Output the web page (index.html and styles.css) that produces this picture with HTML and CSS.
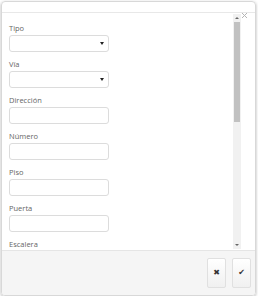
FILE: index.html
```html
<!DOCTYPE html>
<html lang="es">
<head>
    <meta charset="UTF-8">
    <meta name="viewport" content="width=device-width, initial-scale=1.0">
    <title>Dirección</title>
    <link rel="stylesheet" href="styles.css">
</head>
<body>
    <div class="dialog">
        <div class="header"></div>
        <span class="close">
            <svg width="7" height="7" viewBox="0 0 7 7"><path d="M1 1L6 6M6 1L1 6" stroke="#b5b5b5" stroke-width="1" fill="none"/></svg>
        </span>
        <div class="body">
            <div class="content">
                <div class="field">
                    <label>Tipo</label>
                    <div class="select"><span class="caret"></span></div>
                </div>
                <div class="field">
                    <label>Vía</label>
                    <div class="select"><span class="caret"></span></div>
                </div>
                <div class="field">
                    <label>Dirección</label>
                    <div class="input"></div>
                </div>
                <div class="field">
                    <label>Número</label>
                    <div class="input"></div>
                </div>
                <div class="field">
                    <label>Piso</label>
                    <div class="input"></div>
                </div>
                <div class="field">
                    <label>Puerta</label>
                    <div class="input"></div>
                </div>
                <div class="field">
                    <label>Escalera</label>
                    <div class="input"></div>
                </div>
            </div>
            <div class="scrollbar">
                <div class="arrow"><span class="up"></span></div>
                <div class="track"><div class="thumb"></div></div>
                <div class="arrow"><span class="down"></span></div>
            </div>
        </div>
        <div class="footer">
            <button class="btn">✖</button>
            <button class="btn">✔</button>
        </div>
    </div>
</body>
</html>
```
FILE: styles.css
```css
body {
    margin: 0;
    background: #fff;
    font-family: "Open Sans", Arial, sans-serif;
}
.dialog {
    position: relative;
    box-sizing: border-box;
    width: 255px;
    height: 295px;
    margin: 1px 0 0 1px;
    border: 1px solid #d8d8d8;
    border-radius: 4px;
    box-shadow: 0 1px 3px rgba(0, 0, 0, 0.3);
    display: flex;
    flex-direction: column;
    overflow: hidden;
}
.header {
    height: 10px;
    border-bottom: 1px solid #e8e8e8;
}
.close {
    position: absolute;
    top: 10px;
    right: 7px;
    line-height: 0;
}
.body {
    height: 237px;
    display: flex;
}
.content {
    flex: 1;
    overflow: hidden;
    padding: 9px 0 0 7px;
}
.field {
    margin-bottom: 6px;
}
.field label {
    display: block;
    font-size: 7.5px;
    line-height: 12px;
    color: #666;
    margin-bottom: 1px;
}
.select, .input {
    box-sizing: border-box;
    width: 100px;
    height: 17px;
    border: 1px solid #dcdcdc;
    border-radius: 3px;
    background: #fff;
    position: relative;
}
.caret {
    position: absolute;
    right: 4px;
    top: 6px;
    border-left: 2px solid transparent;
    border-right: 2px solid transparent;
    border-top: 3px solid #222;
}
.scrollbar {
    width: 8px;
    margin: 1px 14px 1px 0;
    background: #f1f1f1;
    display: flex;
    flex-direction: column;
}
.arrow {
    height: 8px;
    display: flex;
    align-items: center;
    justify-content: center;
}
.up {
    border-left: 2px solid transparent;
    border-right: 2px solid transparent;
    border-bottom: 2px solid #666;
}
.down {
    border-left: 2px solid transparent;
    border-right: 2px solid transparent;
    border-top: 2px solid #666;
}
.track {
    flex: 1;
    padding: 0 1px;
}
.thumb {
    height: 100px;
    background: #c1c1c1;
}
.footer {
    flex: 1;
    border-top: 1px solid #e5e5e5;
    background: #f5f5f5;
    display: flex;
    justify-content: flex-end;
    align-items: flex-start;
    gap: 6px;
    padding: 7px 4px 0 0;
}
.btn {
    width: 19px;
    height: 30px;
    padding: 0;
    border: 1px solid #e0e0e0;
    border-radius: 2px;
    background: linear-gradient(#ffffff, #f0f0f0);
    color: #333;
    font-family: "DejaVu Sans", sans-serif;
    font-size: 8px;
    line-height: 28px;
}
```
